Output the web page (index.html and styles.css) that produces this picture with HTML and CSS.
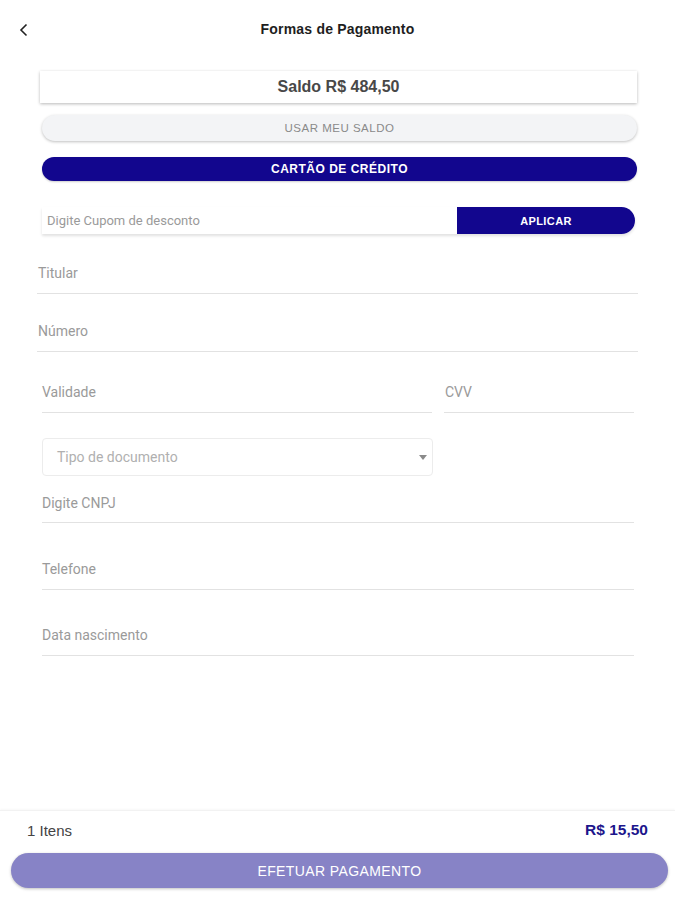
FILE: index.html
```html
<!DOCTYPE html>
<html lang="pt-BR">
<head>
<meta charset="utf-8">
<title>Formas de Pagamento</title>
<link rel="stylesheet" href="styles.css">
</head>
<body>
<div class="page">
  <header class="topbar">
    <span class="back">
      <svg width="12" height="14" viewBox="0 0 12 14"><path d="M8.5 1.5 L3 7 L8.5 12.5" fill="none" stroke="#222" stroke-width="1.6"/></svg>
    </span>
    <h1 class="title">Formas de Pagamento</h1>
    <span></span>
  </header>

  <main class="content">
    <div class="saldo-card">Saldo R$ 484,50</div>
    <div class="btn btn-light">USAR MEU SALDO</div>
    <div class="btn btn-navy">CARTÃO DE CRÉDITO</div>

    <div class="coupon">
      <div class="coupon-input">Digite Cupom de desconto</div>
      <div class="coupon-btn">APLICAR</div>
    </div>

    <div class="field wide f-titular"><span>Titular</span></div>
    <div class="field wide f-numero"><span>Número</span></div>

    <div class="row f-validade">
      <div class="field grow"><span>Validade</span></div>
      <div class="field cvv"><span>CVV</span></div>
    </div>

    <div class="select">
      <span>Tipo de documento</span>
      <svg width="8" height="5" viewBox="0 0 8 5"><path d="M0 0 H8 L4 5 Z" fill="#8a8a8a"/></svg>
    </div>

    <div class="field f-cnpj"><span>Digite CNPJ</span></div>
    <div class="field f-tel"><span>Telefone</span></div>
    <div class="field f-data"><span>Data nascimento</span></div>
  </main>

  <footer class="footer">
    <div class="summary">
      <span class="items">1 Itens</span>
      <span class="total">R$ 15,50</span>
    </div>
    <div class="pay">EFETUAR PAGAMENTO</div>
  </footer>
</div>
</body>
</html>
```

FILE: styles.css
```css
* { box-sizing: border-box; }
html, body { margin: 0; padding: 0; background: #fff; }
body { font-family: "Liberation Sans", Arial, sans-serif; color: #222; }

.page {
  height: 900px;
  display: flex;
  flex-direction: column;
}

.topbar {
  height: 57px;
  display: grid;
  grid-template-columns: 60px 1fr 60px;
  align-items: center;
}
.back {
  padding-left: 18px;
  padding-top: 2px;
  display: flex;
}
.title {
  margin: 0;
  text-align: center;
  font-size: 14px;
  font-weight: bold;
  color: #1e1e1e;
  letter-spacing: 0.2px;
}

.content {
  flex: 1;
  padding: 14px 38px 0 40px;
}

.saldo-card {
  height: 32px;
  background: #fff;
  box-shadow: 0 1px 3px rgba(0,0,0,0.28);
  display: flex;
  align-items: center;
  justify-content: center;
  font-size: 16px;
  font-weight: bold;
  color: #484848;
}

.btn {
  display: flex;
  align-items: center;
  justify-content: center;
  border-radius: 14px;
  font-size: 11.5px;
  letter-spacing: 0.5px;
  margin-left: 2px;
}
.btn-light {
  margin-top: 12px;
  height: 26px;
  background: #f3f4f6;
  color: #8a8a8a;
  box-shadow: 0 1px 3px rgba(0,0,0,0.25);
}
.btn-navy {
  margin-top: 16px;
  height: 24px;
  background: #12068e;
  color: #fff;
  font-size: 12px;
  font-weight: bold;
  box-shadow: 0 1px 2px rgba(0,0,0,0.2);
}

.coupon {
  margin-top: 26px;
  margin-left: 2px;
  margin-right: 2px;
  height: 27px;
  display: flex;
  border-radius: 0 14px 14px 0;
  box-shadow: 0 2px 3px rgba(0,0,0,0.12);
}
.coupon-input {
  flex: 1;
  display: flex;
  align-items: center;
  padding-left: 5px;
  font-family: Roboto, "Liberation Sans", sans-serif;
  font-size: 13px;
  color: #9a9a9a;
  border-radius: 8px 0 0 8px;
}
.coupon-btn {
  width: 178px;
  background: #12068e;
  color: #fff;
  font-size: 11px;
  font-weight: bold;
  letter-spacing: 0.4px;
  display: flex;
  align-items: center;
  justify-content: center;
  border-radius: 0 14px 14px 0;
}

.field {
  border-bottom: 1px solid #e2e2e2;
  padding-bottom: 10px;
  font-family: Roboto, "Liberation Sans", sans-serif;
  font-size: 14px;
  line-height: 20px;
  color: #9a9a9a;
  margin-left: 2px;
  margin-right: 3px;
}
.field span { display: block; }
.field.wide { margin-left: -3px; margin-right: -1px; padding-left: 1px; }
.f-titular { padding-top: 29px; }
.f-numero { padding-top: 27px; }

.row {
  display: flex;
  gap: 12px;
  padding-top: 30px;
  margin-left: 2px;
  margin-right: 3px;
}
.row .field { margin: 0; }
.row .grow { flex: 1; }
.row .cvv { width: 190px; padding-left: 1px; }

.select {
  margin-top: 25px;
  margin-left: 2px;
  width: 391px;
  height: 38px;
  border: 1px solid #ececec;
  border-radius: 4px;
  display: flex;
  align-items: center;
  justify-content: space-between;
  padding: 0 5px 0 14px;
  font-family: Roboto, "Liberation Sans", sans-serif;
  font-size: 14px;
  color: #b0b0b0;
}

.f-cnpj { padding-top: 17px; padding-bottom: 9px; }
.f-tel { padding-top: 36px; }
.f-data { padding-top: 35px; }

.footer {
  height: 90px;
  border-top: 1px solid #f2f2f2;
  box-shadow: 0 -1px 2px rgba(0,0,0,0.03);
  padding: 9px 27px 0 27px;
}
.summary {
  display: flex;
  justify-content: space-between;
  align-items: center;
  height: 20px;
  font-size: 15px;
}
.items { color: #444; }
.total { color: #1c168c; font-weight: bold; font-size: 15.5px; }
.pay {
  margin: 13px -20px 0 -16px;
  height: 35px;
  border-radius: 18px;
  background: #8783c6;
  color: #fff;
  font-size: 14px;
  letter-spacing: 0.4px;
  display: flex;
  align-items: center;
  justify-content: center;
  box-shadow: 0 1px 3px rgba(0,0,0,0.25);
}
```
